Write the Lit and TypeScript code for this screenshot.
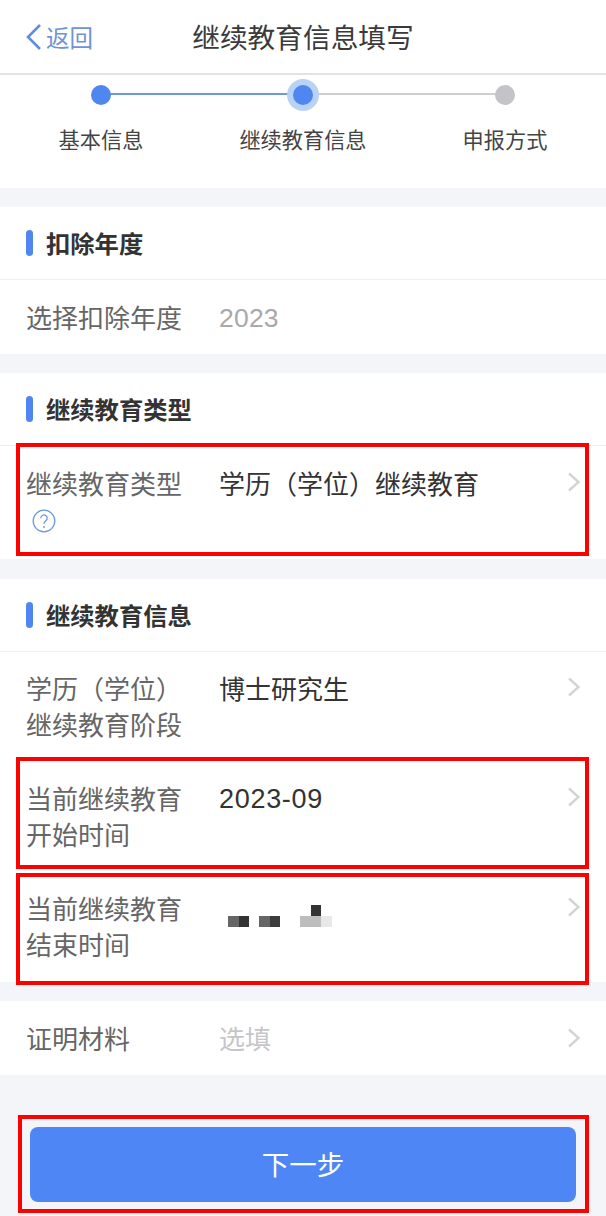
import { LitElement, html, css, nothing } from "lit";
import { customElement } from "lit/decorators.js";

const chevron = html`<svg class="chev" viewBox="0 0 14 20" width="14" height="20"><path d="M2 1.5 L11.5 10 L2 18.5" fill="none" stroke="#d3d4d7" stroke-width="2.4"/></svg>`;

@customElement("app-root")
export class AppRoot extends LitElement {
  static styles = css`
    :host { display: block; width: 606px; height: 1216px; overflow: hidden; background: #f4f5f9; color: #333; font-family: "Noto Sans CJK SC", "Inter", sans-serif; position: relative; }
    * { box-sizing: border-box; }
    .nav { height: 75px; background: #fff; border-bottom: 2px solid #e3e3e5; display: grid; grid-template-columns: 1fr auto 1fr; align-items: center; padding: 0 25px; }
    .back { display: flex; align-items: center; gap: 3px; color: #6f93d6; font-size: 23.5px; line-height: 30px; }
    .title { font-size: 27.7px; color: #3a3a3a; line-height: 34px; margin-top: -2px; }
    .steps { height: 113px; background: #fff; position: relative; }
    .track { position: absolute; left: 101px; top: 18px; width: 404px; height: 2px; display: flex; }
    .track .on { flex: 1; background: #6e97dc; }
    .track .off { flex: 1; background: #cfcfd2; }
    .step-row { display: grid; grid-template-columns: 202px 202px 202px; position: relative; }
    .step { display: flex; flex-direction: column; align-items: center; }
    .dot-wrap { height: 40px; display: flex; align-items: center; justify-content: center; }
    .dot { width: 20px; height: 20px; border-radius: 50%; background: #4f86f0; }
    .dot.cur { box-shadow: 0 0 0 6px #b9d3f6; }
    .dot.todo { background: #c3c3c8; }
    .step-label { font-size: 21.2px; line-height: 30px; color: #444; margin-top: 9px; }
    .section { background: #fff; margin-top: 19px; }
    .section.wide { margin-top: 20px; }
    .head { height: 73px; display: flex; align-items: center; gap: 13px; padding-left: 26px; padding-bottom: 2px; border-bottom: 1px solid #eeeef0; }
    .bar { width: 7px; height: 26px; border-radius: 3.5px; background: #4f86f0; margin-top: 2px; }
    .head-text { font-size: 24.3px; font-weight: 700; color: #333; }
    .row { display: grid; grid-template-columns: 193px 1fr 20px; padding: 0 26px; position: relative; font-size: 26px; line-height: 36px; }
    .row.one { height: 74px; align-items: center; }
    .row.two { height: 110px; padding-top: 18px; }
    .row.two.kind { height: 113px; padding-top: 19px; }
    .row .k { color: #666; }
    .row .v { color: #333; }
    .row .v.grey { color: #a9a9ad; }
    .row .v.ph { color: #c6c6ca; }
    .num { font-family: "Liberation Sans", sans-serif; font-size: 26.5px; letter-spacing: 0.2px; padding-top: 1px; }
    .date { font-family: "Liberation Sans", sans-serif; font-size: 27px; letter-spacing: 0.7px; position: relative; top: -1px; }
    .end { justify-self: end; margin-right: -1px; }
    .row.two .end { padding-top: 7px; }
    .row.one .end { display: flex; }
    .chev { display: block; }
    .help { display: block; margin: 8px 0 0 6px; }
    .mark { position: absolute; border: 4px solid #f00; pointer-events: none; left: 16px; right: 17px; }
    .m1 { top: -3px; bottom: 3px; }
    .m2 { top: -5px; bottom: 3px; }
    .m3 { top: 1px; bottom: -3px; }
    .blur { display: flex; align-items: flex-end; height: 37px; padding-left: 9px; }
    .px { width: 10.5px; height: 11px; }
    .px-gap { width: 10px; }
    .px-gap.wide { width: 20px; }
    .px-tall { position: relative; }
    .px-top { position: absolute; left: 0; top: -11px; width: 10.5px; height: 11px; background: #333; }
    .c1 { background: #666; }
    .c2 { background: #333; }
    .c3 { background: #3c3c3c; }
    .c4 { background: #bdbdbd; }
    .c5 { background: #e8e8e8; }
    .foot { padding: 52px 30px 0; position: relative; }
    .btn { height: 75px; border-radius: 8px; background: #4f86f5; color: #fff; font-size: 27.5px; display: flex; align-items: center; justify-content: center; padding-bottom: 4px; }
    .m4 { left: 18px; top: 40px; height: 98px; }
  `;

  private row(k: unknown, v: unknown, mark = "") {
    return html`<div class="row two"><div class="k">${k}</div><div class="v">${v}</div><div class="end">${chevron}</div>${mark ? html`<div class="mark ${mark}"></div>` : nothing}</div>`;
  }

  render() {
    return html`
      <div class="nav">
        <div class="back"><svg width="18" height="28" viewBox="0 0 18 28"><path d="M15 2 L3 14 L15 26" fill="none" stroke="#5f8ee0" stroke-width="2.6"/></svg><span>返回</span></div>
        <div class="title">继续教育信息填写</div>
        <div></div>
      </div>
      <div class="steps">
        <div class="track"><div class="on"></div><div class="off"></div></div>
        <div class="step-row">
          <div class="step"><div class="dot-wrap"><div class="dot"></div></div><div class="step-label">基本信息</div></div>
          <div class="step"><div class="dot-wrap"><div class="dot cur"></div></div><div class="step-label">继续教育信息</div></div>
          <div class="step"><div class="dot-wrap"><div class="dot todo"></div></div><div class="step-label">申报方式</div></div>
        </div>
      </div>
      <div class="section">
        <div class="head"><div class="bar"></div><div class="head-text">扣除年度</div></div>
        <div class="row one"><div class="k">选择扣除年度</div><div class="v grey num">2023</div><div></div></div>
      </div>
      <div class="section">
        <div class="head"><div class="bar"></div><div class="head-text">继续教育类型</div></div>
        <div class="row two kind">
          <div class="k">继续教育类型
            <svg class="help" width="24" height="24" viewBox="0 0 24 24"><circle cx="12" cy="12" r="10.8" fill="none" stroke="#6e97dc" stroke-width="1.3"/><path d="M8.8 9.2a3.2 3.2 0 1 1 5 2.6c-1.2.9-1.8 1.4-1.8 3" fill="none" stroke="#6e97dc" stroke-width="1.3"/><circle cx="12" cy="18" r="0.9" fill="#6e97dc"/></svg>
          </div>
          <div class="v">学历（学位）继续教育</div>
          <div class="end">${chevron}</div>
          <div class="mark m1"></div>
        </div>
      </div>
      <div class="section wide">
        <div class="head"><div class="bar"></div><div class="head-text">继续教育信息</div></div>
        ${this.row(html`学历（学位）<br />继续教育阶段`, "博士研究生")}
        ${this.row(html`当前继续教育<br />开始时间`, html`<span class="date">2023-09</span>`, "m2")}
        ${this.row(html`当前继续教育<br />结束时间`, html`<div class="blur">
            <div class="px c1"></div><div class="px c2"></div><div class="px-gap"></div>
            <div class="px c1"></div><div class="px c3"></div><div class="px-gap wide"></div>
            <div class="px c4"></div><div class="px px-tall c4"><div class="px-top"></div></div><div class="px c5"></div>
          </div>`, "m3")}
      </div>
      <div class="section">
        <div class="row one"><div class="k">证明材料</div><div class="v ph">选填</div><div class="end">${chevron}</div></div>
      </div>
      <div class="foot">
        <div class="btn">下一步</div>
        <div class="mark m4"></div>
      </div>
    `;
  }
}
